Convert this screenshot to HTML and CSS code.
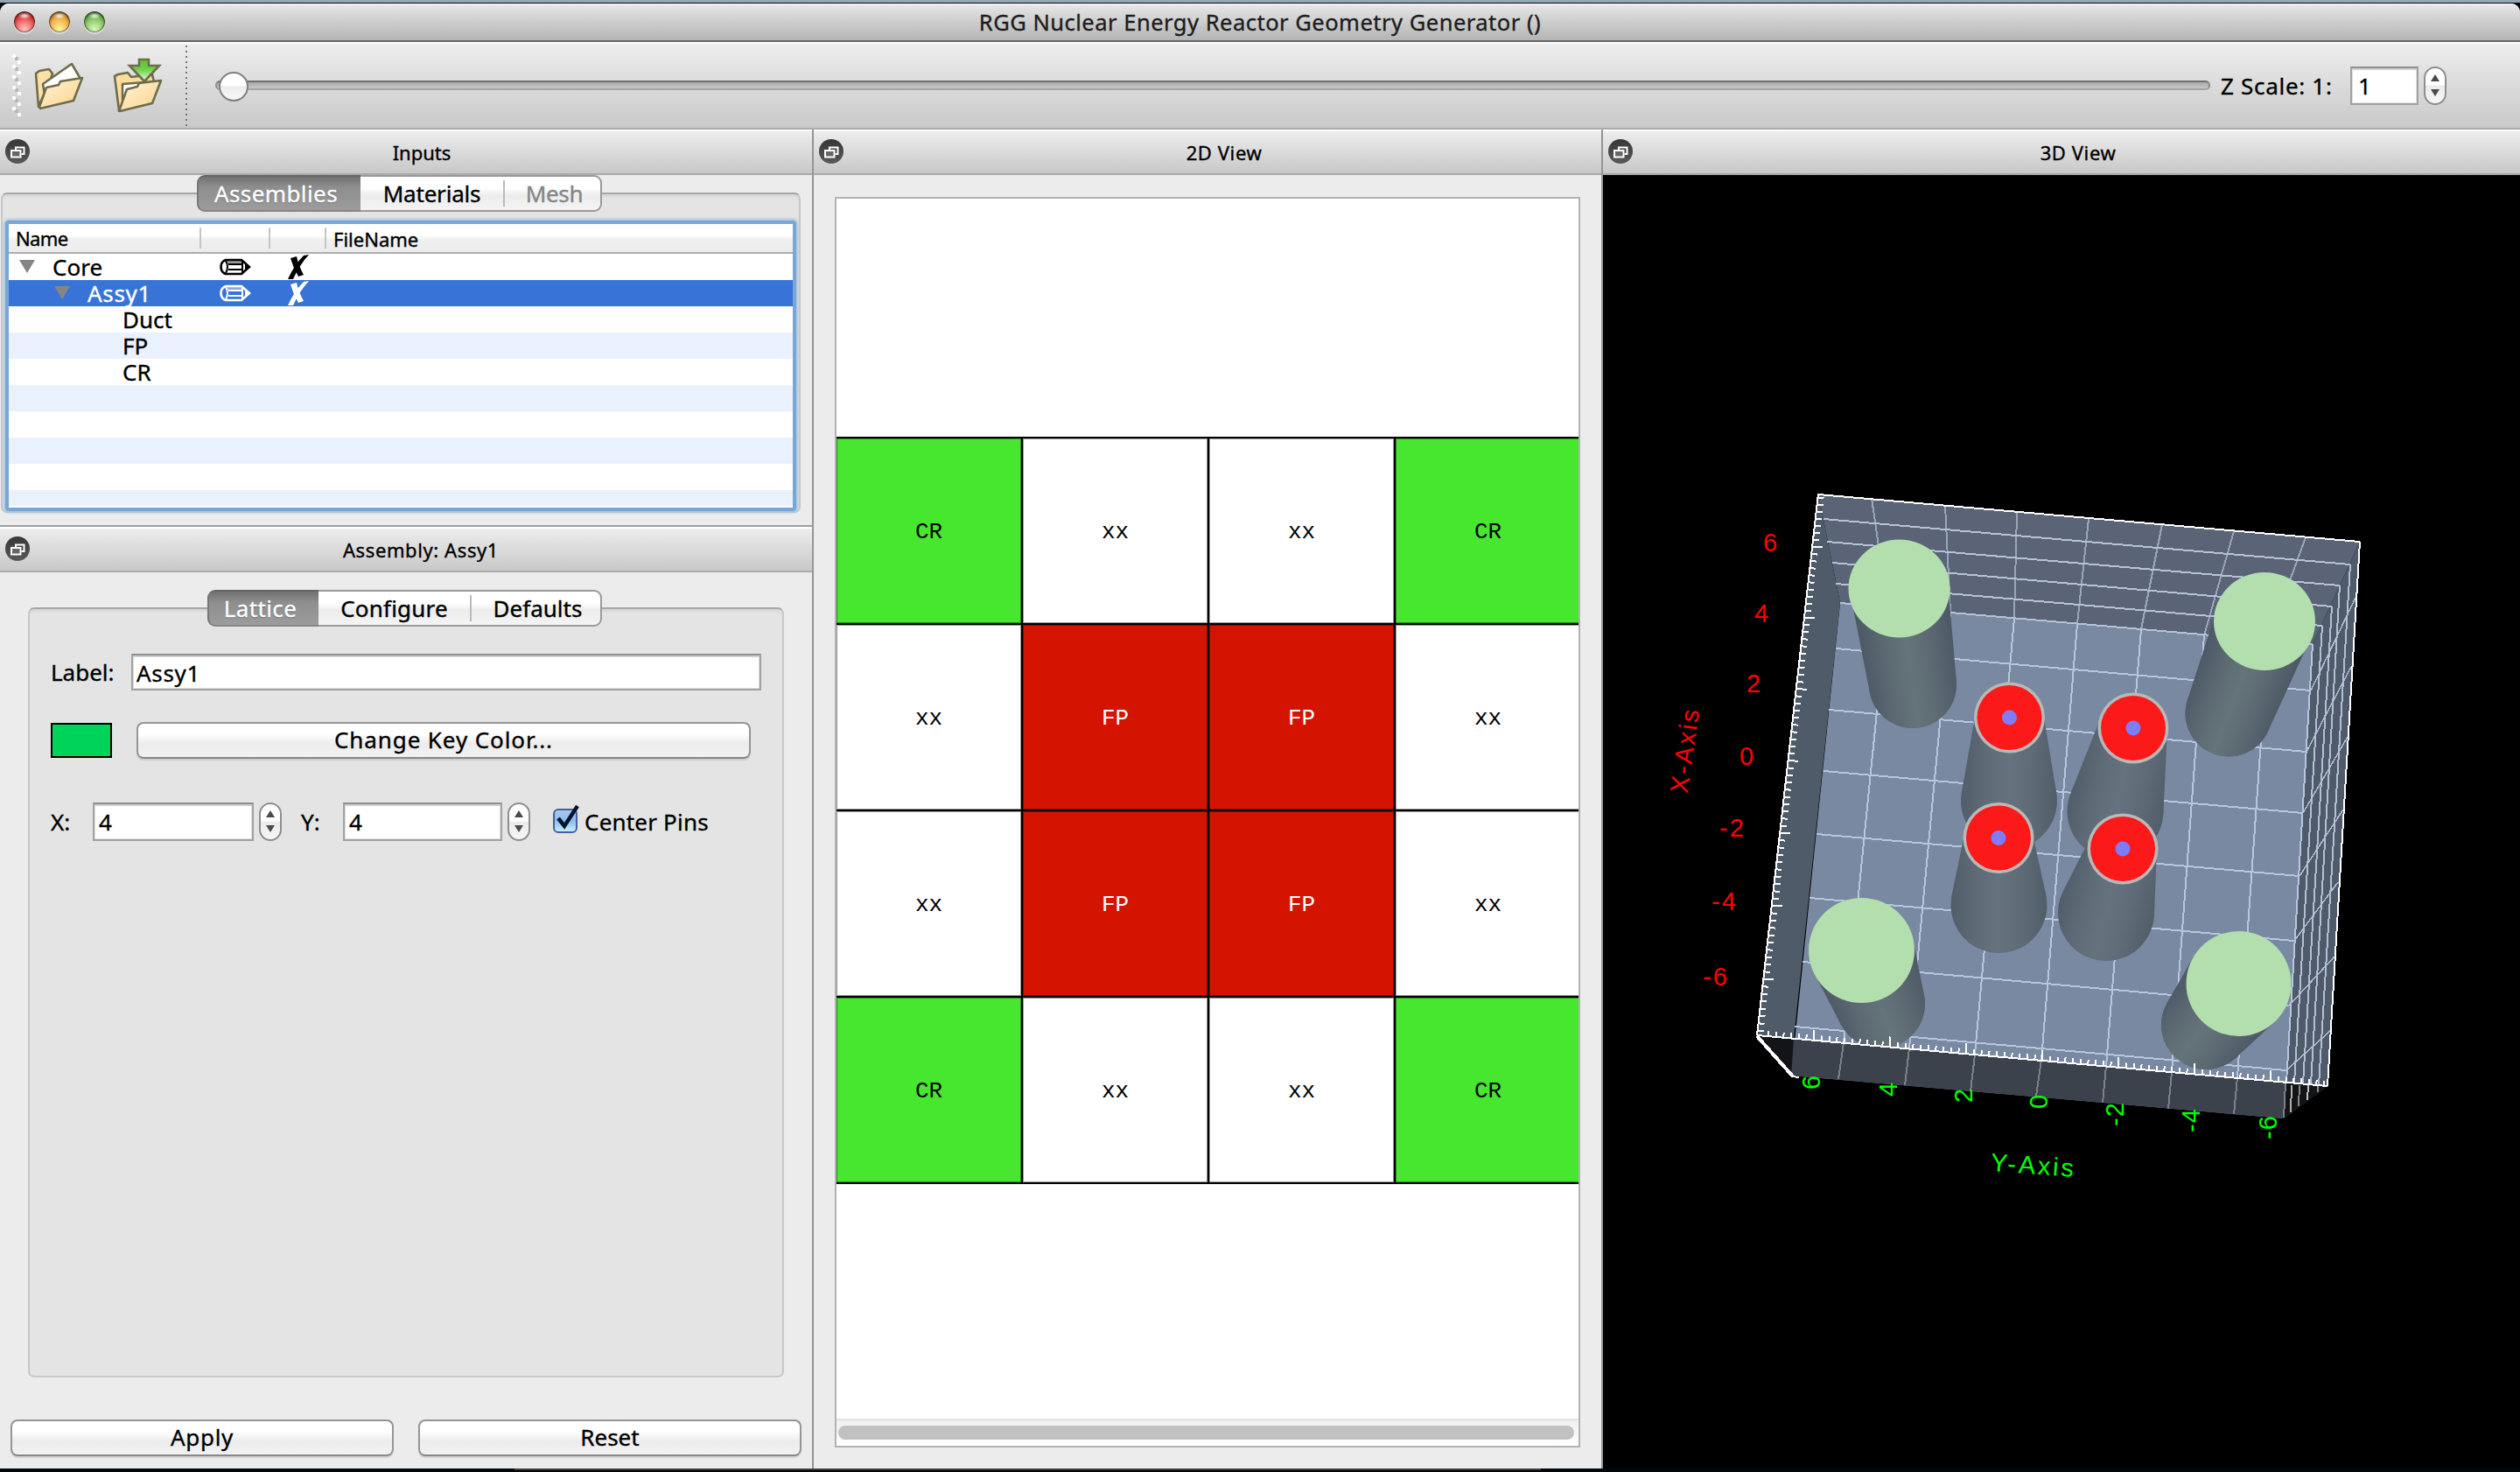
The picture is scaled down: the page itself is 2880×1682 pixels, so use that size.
FILE: index.html
```html
<!DOCTYPE html>
<html lang="en">
<head>
<meta charset="utf-8">
<title>RGG Nuclear Energy Reactor Geometry Generator ()</title>
<link rel="stylesheet" href="styles.css">
</head>
<body>
<svg class="defs" width="0" height="0" aria-hidden="true">
  <defs>
    <linearGradient id="paper" x1="0" y1="0" x2="1" y2="1"><stop offset="0" stop-color="#fff5dc"/><stop offset="1" stop-color="#fdd186"/></linearGradient>
    <linearGradient id="arrow" x1="0" y1="0" x2="0" y2="1"><stop offset="0" stop-color="#5cc52d"/><stop offset="0.45" stop-color="#6fd045"/><stop offset="1" stop-color="#eefbe8"/></linearGradient>
    <linearGradient id="disc" x1="0" y1="0" x2="0" y2="1"><stop offset="0" stop-color="#363636"/><stop offset="1" stop-color="#5a5a5a"/></linearGradient>
    <symbol id="float" viewBox="0 0 28 28">
      <circle cx="14" cy="14" r="14" fill="url(#disc)"/>
      <path d="M12 12V9.500H21.500V17H18.500" fill="none" stroke="#fff" stroke-width="2"/>
      <rect x="7" y="13" width="10.500" height="7.500" fill="#666" stroke="#fff" stroke-width="2"/>
    </symbol>
    <symbol id="pencil" viewBox="0 0 36 20">
      <path d="M7 2H25L34 10L25 18H7Q1.500 16 1.500 10T7 2Z" fill="none" stroke="currentColor" stroke-width="2.600"/>
      <path d="M7 3Q11 10 7 17M10 7H27M10 13H27M26 3V17" fill="none" stroke="currentColor" stroke-width="2"/>
      <path d="M8 3H25L28 6H9Z" fill="currentColor" opacity="0.4"/>
      <path d="M29 6L34 10L29 14Z" fill="currentColor"/>
    </symbol>
    <symbol id="cross" viewBox="0 0 24 28">
      <path d="M3 4L10 2Q12 12 18 23L12 25Q6 15 3 4Z" fill="currentColor"/>
      <path d="M18 1L24 0Q13 12 6 28L0 28Q7 12 18 1Z" fill="currentColor"/>
    </symbol>
  </defs>
</svg>
<div class="desktop">
<div class="window">
  <header class="titlebar">
    <div class="lights"><i class="light red"></i><i class="light amber"></i><i class="light green"></i></div>
    <h1 class="title">RGG Nuclear Energy Reactor Geometry Generator ()</h1>
  </header>

  <div class="toolbar">
    <div class="grip"></div>
    <svg class="tool open" viewBox="0 0 58 56" width="58" height="56">
      <g stroke="#6f6c4c" stroke-width="2.600" stroke-linejoin="round">
        <path d="M3 12L7 9L18 7L22 12L20 18L6 50Z" fill="#fde0a6"/>
        <path d="M11 24L44 1L54 18L13 36Z" fill="#fff"/>
        <path d="M7 50L15 28L29 25L31 21L56 17L46 43L8 52Z" fill="url(#paper)"/>
      </g>
    </svg>
    <svg class="tool save" viewBox="0 0 58 64" width="58" height="64">
      <g stroke="#6f6c4c" stroke-width="2.600" stroke-linejoin="round">
        <path d="M3 21L7 19L18 17L22 22L46 19L48 28L8 60Z" fill="#fddd9c"/>
        <path d="M12 30L50 27L46 34L12 48Z" fill="#fff"/>
        <path d="M8 61L17 36L29 33L31 29L56 26L46 52L9 61Z" fill="url(#paper)"/>
        <path d="M31 2H42V9H54L37 27L20 9H31Z" fill="url(#arrow)" stroke-linejoin="miter"/>
      </g>
    </svg>
    <div class="divider"></div>
    <div class="slider"><i class="knob"></i></div>
    <label class="zscale">Z Scale: 1:</label>
    <div class="field zfield">1</div>
    <div class="stepper"><i class="up"></i><i class="down"></i></div>
  </div>

  <main class="panes">
    <section class="pane inputs">
      <div class="dockbar"><svg class="float"><use href="#float"/></svg><h2 class="t-inputs">Inputs</h2></div>
      <div class="treebox">
        <div class="tabs">
          <span class="tab active w-assemblies">Assemblies</span><span class="tab w-materials">Materials</span><span class="tab disabled w-mesh">Mesh</span>
        </div>
        <div class="group">
          <div class="tree">
            <div class="row head"><span class="c1">Name</span><span class="c2"></span><span class="c3"></span><span class="c4">FileName</span></div>
            <div class="row"><span class="c1"><i class="caret"></i>Core</span><span class="c2"><svg class="pencil"><use href="#pencil"/></svg></span><span class="c3"><svg class="cross"><use href="#cross"/></svg></span></div>
            <div class="row selected"><span class="c1 l2"><i class="caret"></i>Assy1</span><span class="c2"><svg class="pencil"><use href="#pencil"/></svg></span><span class="c3"><svg class="cross"><use href="#cross"/></svg></span></div>
            <div class="row"><span class="c1 l3">Duct</span></div>
            <div class="row alt"><span class="c1 l3">FP</span></div>
            <div class="row"><span class="c1 l3">CR</span></div>
            <div class="row alt"></div><div class="row"></div><div class="row alt"></div><div class="row"></div><div class="row alt last"></div>
          </div>
        </div>
      </div>

      <div class="dockbar second"><svg class="float"><use href="#float"/></svg><h2 class="t-assembly">Assembly: Assy1</h2></div>
      <div class="assembly">
        <div class="tabs">
          <span class="tab active w-lattice">Lattice</span><span class="tab w-configure">Configure</span><span class="tab w-defaults">Defaults</span>
        </div>
        <div class="group form">
          <div class="line name"><label>Label:</label><div class="field">Assy1</div></div>
          <div class="line key"><i class="swatch"></i><button class="button">Change Key Color...</button></div>
          <div class="line size">
            <label class="lx">X:</label><div class="field fx">4</div><div class="stepper"><i class="up"></i><i class="down"></i></div>
            <label class="ly">Y:</label><div class="field fy">4</div><div class="stepper"><i class="up"></i><i class="down"></i></div>
            <svg class="check" viewBox="0 0 32 38" width="32" height="38">
              <defs><linearGradient id="aqua" x1="0" y1="0" x2="0" y2="1"><stop offset="0" stop-color="#a9c8f0"/><stop offset="0.5" stop-color="#8fbdf0"/><stop offset="1" stop-color="#c9f3ff"/></linearGradient></defs>
              <rect x="2" y="8" width="26" height="26" rx="5" fill="url(#aqua)" stroke="#46609c" stroke-width="2"/>
              <path d="M7 18L14 27L29 4" fill="none" stroke="#04162c" stroke-width="4.500"/>
            </svg>
            <span class="pins">Center Pins</span>
          </div>
        </div>
        <div class="actions"><button class="button apply">Apply</button><button class="button reset">Reset</button></div>
      </div>
    </section>

    <section class="pane view2d">
      <div class="dockbar"><svg class="float"><use href="#float"/></svg><h2 class="t-2d">2D View</h2></div>
      <div class="canvas">
        <div class="lattice">
          <div class="cell cr">CR</div><div class="cell">xx</div><div class="cell">xx</div><div class="cell cr">CR</div>
          <div class="cell">xx</div><div class="cell fp">FP</div><div class="cell fp">FP</div><div class="cell">xx</div>
          <div class="cell">xx</div><div class="cell fp">FP</div><div class="cell fp">FP</div><div class="cell">xx</div>
          <div class="cell cr">CR</div><div class="cell">xx</div><div class="cell">xx</div><div class="cell cr">CR</div>
        </div>
        <div class="scrollbar"><i class="thumb"></i></div>
      </div>
    </section>

    <section class="pane view3d">
      <div class="dockbar"><svg class="float"><use href="#float"/></svg><h2 class="t-3d">3D View</h2></div>
      <svg class="scene" id="scene" viewBox="1832 200 1048 1478" width="1048" height="1478"></svg>
    </section>
  </main>
</div>
<div class="below"></div>
</div>
<script src="scene.js"></script>
</body>
</html>
```
FILE: styles.css
```css
* { box-sizing: border-box; }
body {
  margin: 0;
  width: 2880px;
  height: 1682px;
  overflow: hidden;
  background: #06141b;
  font-family: "Noto Sans", "Open Sans", sans-serif;
  font-size: 26px;
  line-height: 30px;
  color: #000;
  -webkit-text-stroke: 0.35px currentColor;
}
h1, h2 { margin: 0; font-weight: 400; }
i { display: block; }
.defs { position: absolute; }
.desktop { border-top: 3px solid #93a7b0; padding-top: 1px; height: 1682px; background: #02070b; }
.window { display: flex; flex-direction: column; height: 1674px; background: #ececec; border-radius: 10px 10px 0 0; overflow: hidden; }
.below { height: 2px; margin-left: 588px; width: 1173px; background: #3c3c3c; }

.titlebar {
  display: grid;
  align-items: center;
  height: 44px;
  background: linear-gradient(#f4f4f4, #e2e2e2 4px, #b4b4b4);
  border-bottom: 2px solid #666;
}
.titlebar > * { grid-area: 1 / 1; }
.lights { display: flex; gap: 16px; padding-left: 16px; }
.light { width: 24px; height: 24px; border-radius: 50%; box-shadow: inset 0 2px 4px rgba(0,0,0,.55), inset 0 0 0 1px rgba(0,0,0,.4), 0 2px 1px rgba(255,255,255,.45); }
.light.red { background: radial-gradient(ellipse 8px 4px at 50% 20%, #fff, transparent), radial-gradient(circle at 50% 85%, #ffc4c0, #e84444 60%, #a82020); }
.light.amber { background: radial-gradient(ellipse 8px 4px at 50% 20%, #fff, transparent), radial-gradient(circle at 50% 85%, #fff3a0, #eda83c 60%, #a8621a); }
.light.green { background: radial-gradient(ellipse 8px 4px at 50% 20%, #fff, transparent), radial-gradient(circle at 50% 85%, #dcf8b8, #78bf58 60%, #3d7a2c); }
.title { justify-self: center; color: #1c1c1c; font-size: 25.5px; letter-spacing: 0.5px; line-height: 40px; }

.toolbar {
  display: flex;
  align-items: center;
  height: 100px;
  padding-left: 14px;
  background: linear-gradient(#ededed, #c9c9c9);
  border-top: 2px solid #fff;
  border-bottom: 2px solid #aaa;
}
.grip {
  width: 12px; height: 72px;
  background:
    radial-gradient(circle at 2px 2px, #fff 2px, transparent 2.500px) 0 0 / 12px 12px,
    radial-gradient(circle at 5px 5px, #b8b8b8 2px, transparent 2.500px) 0 0 / 12px 12px,
    radial-gradient(circle at 8px 9px, #fff 2px, transparent 2.500px) 0 0 / 12px 12px;
}
.tool { flex: none; }
.tool.open { margin: 4px 0 0 12px; }
.tool.save { margin: 0 0 0 32px; }
.divider { width: 2px; height: 92px; margin-left: 26px; background: repeating-linear-gradient(#777 0 2px, transparent 2px 6px); }
.slider {
  flex: none;
  display: flex;
  align-items: center;
  width: 2280px;
  height: 11px;
  margin: -2px 0 0 32px;
  border: 2px solid #8c8c8c;
  border-top-color: #6f6f6f;
  border-bottom-color: #a4a4a4;
  border-radius: 6px;
  background: linear-gradient(#a8a8a8, #c8c8c8);
}
.knob { flex: none; width: 34px; height: 34px; margin: 3px 0 0 2px; border-radius: 50%; border: 2px solid #808080; background: linear-gradient(#fff 45%, #ececec 50%, #f8f8f8); }
.zscale { flex: none; width: 160px; padding-left: 12px; white-space: nowrap; letter-spacing: 0.7px; }

.field { background: #fff; border: 2px solid #a2a2a2; border-top-color: #8f8f8f; box-shadow: inset 0 2px 0 #cfcfcf, inset 0 0 0 1px #e0e0e0; padding: 1px 0 0 4px; line-height: 38px; white-space: nowrap; letter-spacing: 0.7px; }
.zfield { width: 78px; height: 44px; padding-left: 7px; }
.stepper {
  display: flex; flex-direction: column; align-items: center; justify-content: space-between;
  width: 26px; height: 44px; padding: 7px 0 8px; margin-left: 6px;
  border: 2px solid #8e8e8e; border-radius: 13px;
  background: linear-gradient(#fff 48%, #ebebeb 50%, #f6f6f6);
}
.up, .down { width: 0; height: 0; border: 5px solid transparent; }
.up { border-top: 0; border-bottom: 8px solid #4a4a4a; }
.down { border-bottom: 0; border-top: 8px solid #4a4a4a; }

.panes { display: flex; flex: 1; }
.pane { display: flex; flex-direction: column; }
.inputs { width: 930px; border-right: 2px solid #959595; }
.view2d { width: 902px; border-right: 2px solid #959595; }
.view3d { width: 1048px; background: #000; }
.scene { display: block; }

.dockbar {
  display: flex; align-items: center; flex: none;
  height: 52px; padding-left: 6px;
  background: linear-gradient(#ededed, #c8c8c8);
  border-top: 2px solid #fff; border-bottom: 2px solid #aaa;
}
.dockbar h2 { flex: 1; text-align: center; font-size: 22px; letter-spacing: 0.6px; }
.dockbar .t-inputs { letter-spacing: 0; padding-left: 2px; }
.float { width: 28px; height: 28px; }
.dockbar .float { margin-top: -2px; }
.view2d .dockbar h2, .view3d .dockbar h2 { padding-left: 4px; }

.treebox { height: 402px; padding: 0 13px 0 1px; border-bottom: 2px solid #a0a0a0; }
.tabs { display: flex; justify-content: center; position: relative; height: 42px; margin-right: 3px; }
.tab {
  height: 42px; line-height: 36px; text-align: center; white-space: nowrap;
  background: linear-gradient(#fff 35%, #ececec 55%, #f4f4f4);
  border: 2px solid #9a9a9a; border-width: 2px 0; padding-top: 1px;
}
.tab:first-child { border-left-width: 2px; border-radius: 9px 0 0 9px; padding-right: 8px; letter-spacing: 0.4px; }
.tab:last-child { border-right-width: 2px; border-radius: 0 9px 9px 0; padding-left: 6px; }
.tab:nth-child(3) { background: linear-gradient(#bbb, #bbb) 0 50% / 2px 30px no-repeat, linear-gradient(#fff 35%, #ececec 55%, #f4f4f4); }
.tab.active { color: #fff; background: linear-gradient(#727272, #8e8e8e 12px, #9c9c9c); border-color: #666 #777 #858585; text-shadow: 0 1px 1px rgba(0,0,0,.35); }
.tab.disabled { color: #858585; letter-spacing: -0.3px; }
.w-assemblies { width: 187px; } .w-materials { width: 163px; letter-spacing: -0.2px; } .w-mesh { width: 113px; }
.w-lattice { width: 127px; } .w-configure { width: 173px; letter-spacing: 0.2px; } .w-defaults { width: 151px; }

.group { border: 2px solid #c8c8c8; border-top-color: #a6a6a6; border-radius: 7px; background: #e4e4e4; margin-top: -22px; box-shadow: inset 0 3px 2px #d8d8d8; }
.treebox .group { height: 366px; padding: 30px 2px 0 3px; }
.tree {
  height: 332px; width: 904px; padding: 4px;
  background: #fff; border-radius: 4px; background-clip: content-box;
  box-shadow: inset 0 0 0 4px #79a7d4, 0 0 3px 2px #a9c4de;
}
.row { display: flex; align-items: center; height: 30px; white-space: nowrap; }
.row.alt { background: #eaf1fe; }
.row.last { height: 18px; }
.row.selected { background: #3874d7; color: #fff; letter-spacing: 0.7px; }
.row.head { height: 34px; font-size: 22px; background: linear-gradient(#fff 40%, #f0f0f0 55%, #ececec); border-bottom: 2px solid #adadad; }
.c1 { display: flex; align-items: center; width: 220px; padding-left: 12px; }
.c2 { width: 79px; padding-left: 21px; }
.c3 { width: 64px; padding-left: 20px; }
.c2, .c3 { display: flex; }
.row span { line-height: 28px; padding-bottom: 1px; }
.row.head span { height: 24px; line-height: 26px; border-right: 2px solid #c4c4c4; }
.head .c1 { padding-left: 8px; letter-spacing: -0.6px; }
.row.head .c4 { border: 0; padding-left: 8px; }
.c1.l2 { padding-left: 52px; }
.c1.l3 { padding-left: 130px; }
.caret { border: 9px solid transparent; border-top: 15px solid #858585; border-bottom: 0; margin-right: 20px; }
.pencil { width: 36px; height: 20px; }
.cross { width: 24px; height: 28px; }

.assembly { display: flex; flex-direction: column; padding: 20px 12px 0; }
.form { margin: -22px 20px 0; height: 880px; padding: 51px 24px 0; }
.line { display: flex; align-items: center; }
.name label { width: 92px; }
.name .field { width: 720px; height: 42px; }
.key { margin-top: 36px; }
.swatch { width: 70px; height: 40px; border: 2px solid #000; background: #00d35a; margin-right: 28px; }
.button {
  height: 42px; padding: 0 0 2px; font: inherit; color: #000; white-space: nowrap;
  border: 2px solid #959595; border-bottom-color: #888; border-radius: 8px;
  background: linear-gradient(#fff 30%, #ececec 60%, #f2f2f2);
  box-shadow: 0 2px 1px rgba(0,0,0,.1);
}
.key .button { width: 702px; letter-spacing: 0.9px; }
.size { margin-top: 50px; }
.size .field { height: 44px; padding-left: 5px; }
.lx { width: 48px; } .fx { width: 184px; }
.ly { width: 48px; margin-left: 22px; } .fy { width: 182px; }
.check { margin: -6px 0 0 25px; }
.pins { margin-left: 5px; white-space: nowrap; letter-spacing: 0.2px; }
.actions { display: flex; gap: 28px; margin-top: 48px; }
.actions .button { width: 438px; }
.actions .apply { letter-spacing: 0.7px; }

.canvas { display: flex; flex-direction: column; justify-content: space-between; width: 852px; height: 1429px; margin: 25px 0 0 24px; padding-top: 272px; background: #fff; border: 2px solid #b2b2b2; overflow: hidden; }
.lattice { display: grid; grid-template-columns: repeat(4, 211px); grid-auto-rows: 211px; gap: 2px; width: 854px; padding: 2px 0; background: #000; }
.cell { background: #fff; box-shadow: inset 0 0 0 1px rgba(0,0,0,.4); text-align: center; line-height: 214px; font-family: "Liberation Mono", "DejaVu Sans Mono", monospace; font-size: 26px; -webkit-text-stroke: 0; }
.cr { background: #47e730; }
.fp { background: #d41400; color: #fff; }
.scrollbar { height: 31px; padding: 6px 5px 0 2px; border-top: 2px solid #e4e4e4; background: linear-gradient(#f0f0f0, #fff); }
.thumb { height: 16px; border-radius: 8px; background: #c1c1c1; }

.scene text { font-family: "Liberation Sans", Arial, sans-serif; font-size: 29px; text-anchor: middle; -webkit-text-stroke: 0; }
```
FILE: scene.js
```js
const scene = document.getElementById('scene');
const NS = 'http://www.w3.org/2000/svg';
const defs = document.createElementNS(NS, 'defs');
scene.append(defs);

function add(tag, attrs, text) {
  const el = document.createElementNS(NS, tag);
  for (const k in attrs) el.setAttribute(k, attrs[k]);
  if (text) el.textContent = text;
  scene.append(el);
  return el;
}
const poly = (points, fill) => add('polygon', { points, fill });
const line = (a, b, stroke, w = 2) =>
  add('line', { x1: a[0], y1: a[1], x2: b[0], y2: b[1], stroke, 'stroke-width': w, 'shape-rendering': 'crispEdges' });

// walls of the bounding box
poly('2103,689 2643,736 2610,1278 2047,1229', '#7989a1');
poly('2078,564 2697,619 2643,736 2103,689', '#5a6476');
poly('2078,564 2103,689 2050,1187 2008,1183', '#4f5b69');
poly('2697,619 2643,736 2613,1237 2660,1241', '#4f5b6b');

// floor grid
const floorL = [[2098,741],[2090,811],[2084,881],[2076,953],[2068,1026],[2060,1099],[2051,1173]];
const floorR = [[2641,789],[2636,859],[2632,929],[2628,1001],[2622,1075],[2616,1149],[2613,1223]];
floorL.forEach((p, i) => line(p, floorR[i], '#b5c6de'));
const far = [[2157,693],[2229,700],[2302,707],[2374,713],[2447,719],[2519,726],[2592,732]];
const near = [[2107,1192],[2182,1198],[2257,1205],[2333,1211],[2407,1218],[2482,1225],[2557,1231]];
const foot = [[2101,1233],[2177,1240],[2252,1247],[2327,1253],[2403,1260],[2478,1267],[2553,1273]];
far.forEach((p, i) => line(p, near[i], '#b5c6de'));
line([2643,736], [2613,1237], '#b5c6de');

// back wall grid
const rim = [[2139,569],[2223,577],[2305,585],[2387,593],[2471,599],[2553,607],[2635,614]];
rim.forEach((p, i) => line(p, far[i], '#9aa6b9'));
const backL = [[2084,593],[2088,619],[2094,643],[2098,667],[2103,689]];
const backR = [[2686,645],[2674,669],[2665,693],[2654,715],[2643,736]];
backL.forEach((p, i) => line(p, backR[i], '#b6c3d6'));

// right wall grid
const sideFoot = [[2650,1240],[2641,1239],[2632,1238],[2622,1237]];
sideFoot.forEach((p, i) => line(backR[i], p, '#b3c0d2'));
const sideR = [[2692,683],[2687,762],[2683,842],[2678,925],[2672,1008],[2668,1093],[2663,1178]];
floorR.forEach((p, i) => line(p, sideR[i], '#b3c0d2', 1.5));

// solid body swept between two circles
let gid = 0;
function body(a, ra, b, rb, edge, mid) {
  const dx = b[0] - a[0], dy = b[1] - a[1], d = Math.hypot(dx, dy);
  const ux = dx / d, uy = dy / d, k = (ra - rb) / d, s = Math.sqrt(1 - k * k);
  const at = (c, r, sign) => [c[0] + r * (ux * k - sign * uy * s), c[1] + r * (uy * k + sign * ux * s)];
  const p1 = at(a, ra, 1), p2 = at(b, rb, 1), p3 = at(b, rb, -1), p4 = at(a, ra, -1);
  const g = document.createElementNS(NS, 'linearGradient');
  g.id = 'g' + gid;
  g.setAttribute('gradientUnits', 'userSpaceOnUse');
  const R = Math.max(ra, rb);
  g.setAttribute('x1', b[0] + uy * R); g.setAttribute('y1', b[1] - ux * R);
  g.setAttribute('x2', b[0] - uy * R); g.setAttribute('y2', b[1] + ux * R);
  [[0, edge], [0.25, mid[0]], [0.5, mid[1]], [0.75, mid[0]], [1, edge]].forEach(([o, c]) => {
    const stop = document.createElementNS(NS, 'stop');
    stop.setAttribute('offset', o); stop.setAttribute('stop-color', c);
    g.append(stop);
  });
  defs.append(g);
  add('path', { d: `M${p1}L${p2}A${rb} ${rb} 0 0 0 ${p3}L${p4}A${ra} ${ra} 0 0 0 ${p1}Z`, fill: `url(#g${gid++})` });
  add('circle', { cx: b[0], cy: b[1], r: rb, fill: `url(#g${gid - 1})` });
}
const control = (a, rx, ry, b, rb) => {
  body(a, ry, b, rb, '#4b5765', ['#5b6871', '#65747a']);
  add('ellipse', { cx: a[0], cy: a[1], rx, ry, fill: '#b3deae' });
};
const fuel = (a, b) => {
  body(a, 39, b, 55, '#515d69', ['#5e6a76', '#66737e']);
  add('circle', { cx: a[0], cy: a[1], r: 40.5, fill: '#b9b9b7' });
  add('circle', { cx: a[0], cy: a[1], r: 37, fill: '#fb1919' });
  add('circle', { cx: a[0], cy: a[1], r: 8.5, fill: '#7e7cf8' });
};
control([2170.5,672.5], 58, 56, [2186,782], 50);
control([2588,710], 58, 56, [2547,815], 49.5);
fuel([2296.5,820], [2296,915]);
fuel([2438,832], [2417.5,927]);
fuel([2284,957.5], [2284.5,1034]);
fuel([2426,970], [2407,1043]);
control([2127.5,1086], 60.5, 60, [2149,1147], 51);
control([2558.5,1124], 60, 60, [2521,1171], 51);

// near wall below the floor
poly('2008,1183 2660,1241 2610,1278 2047,1229', '#3b424b');
poly('2008,1183 2050,1187 2047,1229', '#131417');
poly('2613,1237 2660,1241 2610,1278', '#131417');
near.forEach((p, i) => line(p, foot[i], '#7c8188'));
line([2612,1237], [2610,1277], '#7c8188');
line([2619,1240], [2618,1271], '#b0b0b0');
line([2628,1240], [2627,1264], '#8a8a8a');
line([2638,1240], [2637,1257], '#c0c0c0');
line([2649,1240], [2649,1248], '#8a8a8a');

// axis edges and ticks
line([2078,565], [2697,619], '#fff');
line([2697,619], [2660,1241], '#fff');
line([2078,564], [2008,1183], '#fff');
line([2008,1183], [2660,1241], '#fff');
line([2008,1184], [2049,1230], '#fff', 4);
line([2047,1230], [2056,1231], '#fff');
const mix = (a, b, t) => [a[0] + (b[0] - a[0]) * t, a[1] + (b[1] - a[1]) * t];
for (let i = -7; i <= 68; i++) {
  const y = 625 + i * 8.05 + i * i * 0.003;
  if (y > 1178) break;
  const p = mix([2078,564], [2008,1183], (y - 564) / 619);
  line(p, [p[0] + (i % 10 ? 7 : 12), p[1] + 0.5], '#fff');
}
for (let x = 2073 - 8.7 * 6, i = -6; x < 2660; x += 8.7, i++) {
  const p = mix([2008,1183], [2660,1241], (x - 2008) / 652);
  line(p, [p[0] + 0.5, p[1] - (i % 10 ? 6 : 12)], '#fff');
}

// labels
const label = (x, y, angle, fill, text, spacing = 0) =>
  add('text', { transform: `translate(${x} ${y}) rotate(${angle})`, y: 10.5, fill, 'letter-spacing': spacing }, text);
[['6',2023,619],['4',2013,700],['2',2004,780],['0',1996,863],['-2',1980,945],['-4',1971,1029],['-6',1961,1115]]
  .forEach(([t, x, y]) => label(x, y, 0, '#f00', t, t.length > 1 ? 2 : 0));
[['6',2069,1237],['4',2157,1245],['2',2243,1252],['0',2329,1259],['-2',2416,1273],['-4',2503,1280],['-6',2591,1288]]
  .forEach(([t, x, y]) => label(x, y, -90, '#0f0', t, t.length > 1 ? 1 : 0));
label(1925, 857, -82, '#f00', 'X-Axis', 2.5);
label(2324, 1331, 4, '#0f0', 'Y-Axis', 2.8);
```
